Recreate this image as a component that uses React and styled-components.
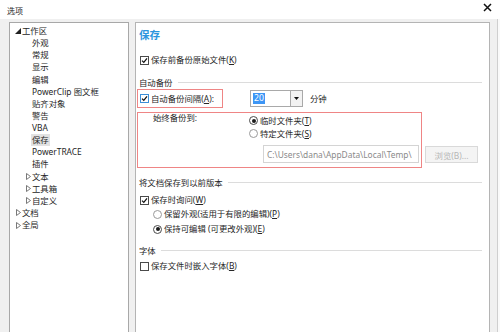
import React from 'react';
import styled, { createGlobalStyle } from 'styled-components';

const GlobalStyle = createGlobalStyle`
  html, body { margin: 0; padding: 0; background: #fff; }
  body {
    font-family: "Noto Sans", "Noto Sans CJK SC", sans-serif;
    font-size: 8.4px;
    color: #262626;
  }
`;

const Window = styled.div`
  width: 500px;
  height: 332px;
  overflow: hidden;
  display: flex;
  flex-direction: column;
  background: #f0f0f0;
`;

const TitleBar = styled.div`
  height: 19px;
  flex: none;
  background: #fff;
  display: flex;
  align-items: flex-start;
  justify-content: space-between;
  padding: 0 8px 0 7px;
`;

const Title = styled.span`
  font-size: 8px;
  line-height: 10px;
  margin-top: 6px;
`;

const CloseIcon = styled.svg`
  margin-top: 3px;
`;

const Body = styled.div`
  flex: 1;
  display: flex;
  gap: 6px;
  padding: 3px 0 0 9px;
  box-shadow: inset -2px 0 0 #fafafa, inset -3px 0 0 #cfcfcf;
`;

const Tree = styled.div`
  width: 120px;
  flex: none;
  box-sizing: border-box;
  border: 1px solid #a8a8a8;
  border-bottom: none;
  background: #fff;
  padding-top: 2px;
`;

const TreeRow = styled.div`
  height: 12.125px;
  display: flex;
  align-items: center;
  padding-left: ${p => 4 + p.$level * 10}px;
`;

const Expander = styled.span`
  width: 8px;
  flex: none;
  display: flex;
  align-items: center;
`;

const TreeLabel = styled.span`
  padding: 1px 1px;
  margin-left: -1px;
  line-height: 10px;
  background: ${p => (p.$selected ? '#e2e2e2' : 'transparent')};
`;

const Content = styled.div`
  width: 355px;
  flex: none;
  box-sizing: border-box;
  border: 1px solid #b4b4b4;
  border-bottom: none;
  background: #fff;
  padding: 4px 7px 0 4px;
  display: flex;
  flex-direction: column;
`;

const Heading = styled.div`
  font-size: 10.5px;
  font-weight: 600;
  line-height: 16px;
  height: 16px;
  color: #2b95de;
  margin-left: -1px;
`;

const Row = styled.div`
  display: flex;
  align-items: center;
  height: ${p => p.$h || 14}px;
  margin-top: ${p => p.$mt || 0}px;
  padding-left: ${p => p.$indent || 0}px;
  gap: 2px;
`;

const GroupHeader = styled.div`
  display: flex;
  align-items: center;
  height: 14px;
  margin-top: ${p => p.$mt || 0}px;
  margin-left: -1px;
  &::after {
    content: '';
    flex: 1;
    height: 1px;
    background: #dcdcdc;
    margin-left: 5px;
  }
`;

const Box = styled.span`
  width: 9px;
  height: 9px;
  flex: none;
  box-sizing: border-box;
  border: 1px solid ${p => (p.$focus ? '#3c8fd8' : '#4a4a4a')};
  background: #fff;
  display: flex;
  align-items: center;
  justify-content: center;
`;

const Circle = styled.span`
  width: 9px;
  height: 9px;
  flex: none;
  box-sizing: border-box;
  border-radius: 50%;
  border: 1px solid ${p => (p.$on ? '#4a4a4a' : '#9a9a9a')};
  background: #fff;
  display: flex;
  align-items: center;
  justify-content: center;
  &::after {
    content: '';
    width: 4px;
    height: 4px;
    border-radius: 50%;
    background: ${p => (p.$on ? '#1a1a1a' : 'transparent')};
  }
`;

const Label = styled.span`
  line-height: 12px;
  white-space: nowrap;
  color: ${p => (p.$disabled ? '#a8a8a8' : 'inherit')};
`;

const U = styled.span`
  text-decoration: underline;
`;

const RedBox = styled.div`
  box-sizing: border-box;
  border: 1px solid #ef8585;
  margin-left: -3px;
  width: ${p => p.$w}px;
  height: ${p => (p.$h ? `${p.$h}px` : 'auto')};
  display: ${p => (p.$grid ? 'grid' : 'flex')};
  align-items: center;
  gap: 2px;
  padding-left: ${p => (p.$grid ? 15 : 2)}px;
  grid-template-columns: 94px 1fr;
  ${p => p.$grid && 'align-items: start; padding-bottom: 4px;'}
`;

const Combo = styled.div`
  display: flex;
  width: 53px;
  height: 17px;
  margin-left: 25px;
`;

const ComboInput = styled.div`
  flex: 1;
  box-sizing: border-box;
  border: 1px solid #a9a9a9;
  border-right: none;
  background: #fff;
  display: flex;
  align-items: center;
  padding-left: 2px;
`;

const Selected = styled.span`
  background: #3d96f5;
  color: #fff;
  line-height: 11px;
  padding: 0 1px;
  font-size: 8.6px;
`;

const ComboButton = styled.div`
  width: 13px;
  box-sizing: border-box;
  border: 1px solid #a9a9a9;
  background: #f2f2f2;
  display: flex;
  align-items: center;
  justify-content: center;
`;

const Unit = styled.span`
  margin-left: 5px;
  line-height: 12px;
`;

const Region = styled.div`
  display: flex;
  align-items: flex-end;
  margin-top: 4px;
`;

const SideLabel = styled.span`
  line-height: 12px;
  margin-top: -1px;
`;

const Choices = styled.div`
  display: flex;
  flex-direction: column;
  padding-top: 1px;
`;

const PathInput = styled.div`
  width: 156px;
  height: 18px;
  box-sizing: border-box;
  margin: 5px 0 0 14px;
  border: 1px solid #d4d4d4;
  background: #fff;
  color: #8a8a8a;
  display: flex;
  align-items: center;
  padding-left: 3px;
  white-space: nowrap;
`;

const Button = styled.div`
  width: 53px;
  height: 17px;
  box-sizing: border-box;
  margin: 0 0 5px 3px;
  border: 1px solid #d9d9d9;
  background: #f4f4f4;
  color: #b4b4b4;
  display: flex;
  align-items: center;
  justify-content: center;
`;

const Expanded = () => (
  <svg width="6" height="6" viewBox="0 0 6 6" style={{ marginLeft: 1 }}>
    <polygon points="6,0 6,6 0,6" fill="#222" />
  </svg>
);

const Collapsed = () => (
  <svg width="5" height="7" viewBox="0 0 5 7" style={{ marginLeft: 2 }}>
    <polygon points="0.5,0.5 4.5,3.5 0.5,6.5" fill="#fff" stroke="#6a6a6a" strokeWidth="0.9" />
  </svg>
);

const Check = () => (
  <svg width="7" height="7" viewBox="0 0 7 7">
    <path d="M1 3.6 L2.8 5.4 L6 1.4" fill="none" stroke="#111" strokeWidth="1.3" />
  </svg>
);

const CheckBox = ({ checked, focus }) => <Box $focus={focus}>{checked && <Check />}</Box>;

const treeItems = [
  { label: '工作区', level: 0, state: 'open' },
  { label: '外观', level: 1 },
  { label: '常规', level: 1 },
  { label: '显示', level: 1 },
  { label: '编辑', level: 1 },
  { label: 'PowerClip 图文框', level: 1 },
  { label: '贴齐对象', level: 1 },
  { label: '警告', level: 1 },
  { label: 'VBA', level: 1 },
  { label: '保存', level: 1, selected: true },
  { label: 'PowerTRACE', level: 1 },
  { label: '插件', level: 1 },
  { label: '文本', level: 1, state: 'closed' },
  { label: '工具箱', level: 1, state: 'closed' },
  { label: '自定义', level: 1, state: 'closed' },
  { label: '文档', level: 0, state: 'closed' },
  { label: '全局', level: 0, state: 'closed' },
];

const App = () => {
  return (
    <>
      <GlobalStyle />
      <Window>
        <TitleBar>
          <Title>选项</Title>
          <CloseIcon width="9" height="9" viewBox="0 0 9 9">
            <path d="M1 1 L8 8 M8 1 L1 8" stroke="#111" strokeWidth="1.5" />
          </CloseIcon>
        </TitleBar>
        <Body>
          <Tree>
            {treeItems.map(item => (
              <TreeRow key={item.label} $level={item.level}>
                <Expander>
                  {item.state === 'open' && <Expanded />}
                  {item.state === 'closed' && <Collapsed />}
                </Expander>
                <TreeLabel $selected={item.selected}>{item.label}</TreeLabel>
              </TreeRow>
            ))}
          </Tree>

          <Content>
            <Heading>保存</Heading>
            <Row $mt={10}>
              <CheckBox checked />
              <Label>保存前备份原始文件(<U>K</U>)</Label>
            </Row>

            <GroupHeader $mt={8}>自动备份</GroupHeader>
            <Row $h={19}>
              <RedBox $w={86} $h={19}>
                <CheckBox checked focus />
                <Label>自动备份间隔(<U>A</U>):</Label>
              </RedBox>
              <Combo>
                <ComboInput>
                  <Selected>20</Selected>
                </ComboInput>
                <ComboButton>
                  <svg width="5" height="3" viewBox="0 0 5 3">
                    <polygon points="0,0 5,0 2.5,3" fill="#111" />
                  </svg>
                </ComboButton>
              </Combo>
              <Unit>分钟</Unit>
            </Row>

            <Region>
              <RedBox $w={285} $grid>
                <SideLabel>始终备份到:</SideLabel>
                <Choices>
                  <Row $h={13}>
                    <Circle $on />
                    <Label>临时文件夹(<U>T</U>)</Label>
                  </Row>
                  <Row $h={13}>
                    <Circle />
                    <Label>特定文件夹(<U>S</U>)</Label>
                  </Row>
                  <PathInput>C:\Users\dana\AppData\Local\Temp\</PathInput>
                </Choices>
              </RedBox>
              <Button>浏览(B)...</Button>
            </Region>

            <GroupHeader $mt={7}>将文档保存到以前版本</GroupHeader>
            <Row $mt={4}>
              <CheckBox checked />
              <Label>保存时询问(<U>W</U>)</Label>
            </Row>
            <Row $indent={13}>
              <Circle />
              <Label>保留外观(适用于有限的编辑)(<U>P</U>)</Label>
            </Row>
            <Row $indent={13} $mt={1}>
              <Circle $on />
              <Label>保持可编辑 (可更改外观)(<U>E</U>)</Label>
            </Row>

            <GroupHeader $mt={7}>字体</GroupHeader>
            <Row $mt={2}>
              <CheckBox />
              <Label>保存文件时嵌入字体(<U>B</U>)</Label>
            </Row>
          </Content>
        </Body>
      </Window>
    </>
  );
};

export default App;
